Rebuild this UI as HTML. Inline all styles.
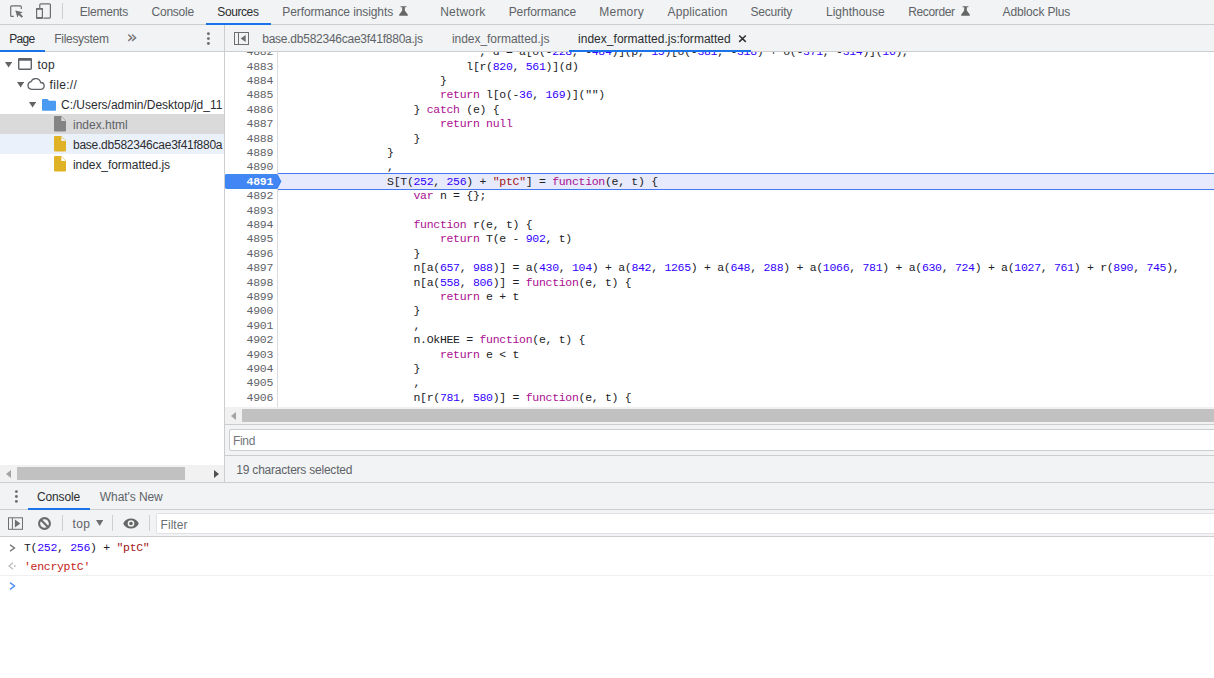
<!DOCTYPE html>
<html>
<head>
<meta charset="utf-8">
<title>DevTools</title>
<style>
*{box-sizing:border-box;margin:0;padding:0}
html,body{width:1214px;height:678px;overflow:hidden;background:#fff}
body{position:relative;font-family:"Liberation Sans",sans-serif;font-size:12px;color:#303942}
.abs{position:absolute}
.t{position:absolute;white-space:nowrap;line-height:16px;height:16px;color:#5f6368;font-size:12px}
.t.sel{color:#2b2d30}
.bar{position:absolute;background:#f1f3f4}
.ln{position:absolute;background:#cbcdd1}
.mono{font-family:"Liberation Mono",monospace;font-size:11.5px;letter-spacing:-0.3px}
.code{position:absolute;left:0;white-space:pre;line-height:14.4px;height:14.4px;color:#202124}
.gn{position:absolute;left:0;width:48px;text-align:right;line-height:14.4px;height:14.4px;color:#5f6368;white-space:pre}
.gn.cur{color:#fff;font-weight:bold}
.k{color:#ab0d90}.n{color:#3200ff}.s{color:#a31515}
</style>
</head>
<body>
<!-- ===== top toolbar ===== -->
<div class="bar" style="left:0;top:0;width:1214px;height:24px"></div>
<div class="ln" style="left:0;top:24px;width:1214px;height:1px"></div>
<div class="ln" style="left:62px;top:3px;width:1px;height:16px;background:#cdcfd2"></div>
<svg class="abs" style="left:8px;top:3px" width="18" height="18" viewBox="0 0 18 18"><path d="M13.300 6v-2.200a1 1 0 0 0-1-1h-8.600a1 1 0 0 0-1 1v8.600a1 1 0 0 0 1 1h2.100" fill="none" stroke="#6e6e6e" stroke-width="1.200"/><path d="M7.300 7.400l7.600 1.900-2.700 1.300 2.800 2.800-1.400 1.400-2.800-2.800-1.400 2.600z" fill="#6e6e6e"/></svg>
<svg class="abs" style="left:34px;top:2px" width="20" height="20" viewBox="0 0 20 20"><path d="M5.800 6.200v-3.400a1 1 0 0 1 1-1h8.600a1 1 0 0 1 1 1v12.300a1 1 0 0 1-1 1h-6" fill="none" stroke="#6e6e6e" stroke-width="1.200"/><rect x="2.600" y="6.700" width="5.800" height="9.400" rx="0.800" fill="none" stroke="#6e6e6e" stroke-width="1.200"/><rect x="2" y="6.100" width="7" height="1.700" rx="0.500" fill="#6e6e6e"/><rect x="2" y="15" width="7" height="1.700" rx="0.500" fill="#6e6e6e"/></svg>

<div id="L1" class="t" style="left:79.84px;top:4px;letter-spacing:-0.232px">Elements</div>
<div id="L2" class="t" style="left:151.56px;top:4px;letter-spacing:-0.241px">Console</div>
<div id="L3" class="t sel" style="left:217.33px;top:4px;letter-spacing:-0.411px">Sources</div>
<div class="abs" style="left:206px;top:23px;width:65px;height:2px;background:#1a73e8"></div>
<div id="L4" class="t" style="left:282.28px;top:4px;letter-spacing:-0.097px">Performance insights</div>
<div id="L5" class="t" style="left:440.28px;top:4px;letter-spacing:0.177px">Network</div>
<div id="L6" class="t" style="left:508.75px;top:4px;letter-spacing:-0.132px">Performance</div>
<div id="L7" class="t" style="left:599.28px;top:4px;letter-spacing:0.226px">Memory</div>
<div id="L8" class="t" style="left:667.59px;top:4px;letter-spacing:0.120px">Application</div>
<div id="L9" class="t" style="left:750.45px;top:4px;letter-spacing:-0.214px">Security</div>
<div id="L10" class="t" style="left:826.05px;top:4px;letter-spacing:-0.014px">Lighthouse</div>
<div id="L11" class="t" style="left:908.28px;top:4px;letter-spacing:-0.374px">Recorder</div>
<div id="L12" class="t" style="left:1002.59px;top:4px;letter-spacing:-0.144px">Adblock Plus</div>
<svg class="abs flask" style="left:398.5px;top:5.500px" width="9" height="10" viewBox="0 0 9 10"><path d="M1.600 0.200h5.800v1h-5.800z M3.200 1.200h2.600v3.200l2.900 4.200a.7.700 0 0 1-.6 1.200h-7.200a.7.700 0 0 1-.6-1.200l2.900-4.200z" fill="#666"/></svg>
<svg class="abs flask" style="left:961.2px;top:5.500px" width="9" height="10" viewBox="0 0 9 10"><path d="M1.600 0.200h5.800v1h-5.800z M3.200 1.200h2.600v3.200l2.900 4.200a.7.700 0 0 1-.6 1.200h-7.200a.7.700 0 0 1-.6-1.200l2.900-4.200z" fill="#666"/></svg>

<!-- ===== navigator (left) ===== -->
<div class="bar" style="left:0;top:25px;width:224px;height:26px"></div>
<div class="ln" style="left:0;top:51px;width:224px;height:1px"></div>
<div class="ln" style="left:224px;top:25px;width:1px;height:457px"></div>
<div id="L13" class="t sel" style="left:9.28px;top:31px;letter-spacing:-0.713px">Page</div>
<div class="abs" style="left:0;top:50px;width:45px;height:2px;background:#1a73e8"></div>
<div id="L14" class="t" style="left:54.28px;top:31px;letter-spacing:-0.296px">Filesystem</div>
<div id="L15" class="t" style="left:126.5px;top:28.500px;font-size:18px;font-family:'DejaVu Sans',sans-serif;color:#6e6e6e">»</div>
<svg class="abs" style="left:206px;top:31px" width="5" height="15" viewBox="0 0 5 15"><circle cx="2.400" cy="2.700" r="1.450" fill="#6e6e6e"/><circle cx="2.400" cy="7.600" r="1.450" fill="#6e6e6e"/><circle cx="2.400" cy="12.500" r="1.450" fill="#6e6e6e"/></svg>

<!-- tree -->
<div class="abs" style="left:0;top:114px;width:224px;height:20px;background:#dadada"></div>
<div class="abs" style="left:0;top:134px;width:224px;height:20px;background:#ebf1fb"></div>
<svg class="abs" style="left:5px;top:62px" width="7.200" height="5.600" viewBox="0 0 7.200 5.600"><path d="M0 0h7.200L3.600 5.600z" fill="#636363"/></svg>
<svg class="abs" style="left:18px;top:58px" width="14" height="12" viewBox="0 0 14 12"><rect x="0.7" y="0.7" width="12.6" height="10.6" rx="1" fill="none" stroke="#5f6368" stroke-width="1.4"/><rect x="0.200" y="0" width="13.600" height="2.700" rx="0.800" fill="#5f6368"/></svg>
<div id="L16" class="t sel" style="left:37.47px;top:57px;letter-spacing:0.265px">top</div>
<svg class="abs" style="left:17px;top:82px" width="7.200" height="5.600" viewBox="0 0 7.200 5.600"><path d="M0 0h7.200L3.600 5.600z" fill="#636363"/></svg>
<svg class="abs" style="left:27px;top:78px" width="18" height="12" viewBox="0 0 18 12"><path d="M4.6 11.3a3.9 3.9 0 0 1-.5-7.7 5 5 0 0 1 9.500.9 3.400 3.400 0 0 1 .3 6.800z" fill="none" stroke="#5f6368" stroke-width="1.3"/></svg>
<div id="L17" class="t sel" style="left:49.52px;top:77px;letter-spacing:0.331px">file://</div>
<svg class="abs" style="left:29px;top:102px" width="7.200" height="5.600" viewBox="0 0 7.200 5.600"><path d="M0 0h7.200L3.600 5.600z" fill="#636363"/></svg>
<svg class="abs" style="left:42px;top:99px" width="14" height="12" viewBox="0 0 14 12"><path d="M0.800 0h4.700l1.500 1.800h6.200a.8.8 0 0 1 .8.800v8.400a.8.8 0 0 1-.8.800h-12.400a.8.8 0 0 1-.8-.8v-10.200a.8.800 0 0 1 .8-.8z" fill="#4a9af1"/></svg>
<div id="L18" class="t sel" style="left:61.10px;top:97px;width:162.90px;overflow:hidden;letter-spacing:-0.023px">C:/Users/admin/Desktop/jd_11</div>
<svg class="abs" style="left:54px;top:116px" width="12" height="16" viewBox="0 0 12 16"><path d="M1 0h6.500l4.500 4.800v9.700a1 1 0 0 1-1 1h-10a1 1 0 0 1-1-1v-13.500a1 1 0 0 1 1-1z" fill="#848484"/><path d="M7.300 0.300v4.700h4.500z" fill="#dadada"/></svg>
<div id="L19" class="t" style="left:72.97px;top:117px;letter-spacing:0.005px">index.html</div>
<svg class="abs" style="left:54px;top:136px" width="12" height="16" viewBox="0 0 12 16"><path d="M1 0h6.500l4.500 4.800v9.700a1 1 0 0 1-1 1h-10a1 1 0 0 1-1-1v-13.500a1 1 0 0 1 1-1z" fill="#e0b327"/><path d="M7.300 0.300v4.700h4.500z" fill="#ebf1fb"/></svg>
<div id="L20" class="t sel" style="left:72.97px;top:137px;width:150.23px;overflow:hidden;letter-spacing:-0.246px">base.db582346cae3f41f880a.js</div>
<svg class="abs" style="left:54px;top:156px" width="12" height="16" viewBox="0 0 12 16"><path d="M1 0h6.500l4.500 4.800v9.700a1 1 0 0 1-1 1h-10a1 1 0 0 1-1-1v-13.500a1 1 0 0 1 1-1z" fill="#e0b327"/><path d="M7.300 0.300v4.700h4.500z" fill="#fff"/></svg>
<div id="L21" class="t sel" style="left:72.90px;top:157px;letter-spacing:-0.050px">index_formatted.js</div>

<!-- navigator h-scrollbar -->
<div class="abs" style="left:0;top:465px;width:224px;height:17px;background:#f1f1f1"></div>
<div class="abs" style="left:17px;top:467px;width:168px;height:13px;background:#c1c1c1"></div>
<svg class="abs" style="left:6px;top:470px" width="5" height="8" viewBox="0 0 5 8"><path d="M5 0v8L0 4z" fill="#a3a3a3"/></svg>
<svg class="abs" style="left:214px;top:470px" width="5" height="8" viewBox="0 0 5 8"><path d="M0 0v8L5 4z" fill="#505050"/></svg>

<!-- ===== editor ===== -->
<div class="bar" style="left:225px;top:25px;width:989px;height:26px"></div>
<div class="ln" style="left:225px;top:51px;width:989px;height:1px"></div>
<svg class="abs" style="left:234px;top:32px" width="15" height="13" viewBox="0 0 15 13"><rect x="0.5" y="0.5" width="14" height="12" fill="none" stroke="#6e6e6e" stroke-width="1"/><path d="M4.500 0.500v12" stroke="#6e6e6e" stroke-width="1"/><path d="M11.700 3.100v6.800L6.600 6.500z" fill="#6e6e6e"/></svg>
<div id="L22" class="t" style="left:262.25px;top:31px;letter-spacing:-0.249px">base.db582346cae3f41f880a.js</div>
<div id="L23" class="t" style="left:451.89px;top:31px;letter-spacing:-0.031px">index_formatted.js</div>
<div id="L24" class="t sel" style="left:578.06px;top:31px;letter-spacing:0.020px">index_formatted.js:formatted</div>
<div class="abs" style="left:569px;top:50px;width:182px;height:2px;background:#1a73e8"></div>
<svg class="abs" style="left:738px;top:34px" width="9" height="9" viewBox="0 0 9 9"><path d="M1.200 1.500l6.600 6.400M7.800 1.500l-6.600 6.400" stroke="#303030" stroke-width="1.500" fill="none"/></svg>

<div class="ln" style="left:277px;top:52px;width:1px;height:355px;background:#dadce0"></div>
<div id="editor" class="abs mono" style="left:225px;top:52px;width:989px;height:355px;overflow:hidden">
<div class="abs" style="left:53px;top:121px;width:940px;height:17px;background:#e7eafc;border-top:1px solid #4478f0;border-bottom:1px solid #4478f0"></div>
<svg class="abs" style="left:0;top:122px" width="58" height="15" viewBox="0 0 58 15"><path d="M1.200 0.400h51l3.700 7-3.700 7h-51a.8.8 0 0 1-.8-.8v-12.400a.8.800 0 0 1 .8-.8z" fill="#4285f4" stroke="#1a73e8" stroke-width="0.800"/></svg>
<!--ED-->
<div class="gn" style="top:-6.8px">4882</div>
<div class="code" style="top:-6.8px;left:254.5px">, d = a[o(-<span class="n">228</span>, -<span class="n">484</span>)](p, <span class="n">15</span>)[o(-<span class="n">381</span>, -<span class="n">318</span>) + o(-<span class="n">371</span>, -<span class="n">314</span>)](<span class="n">16</span>),</div>
<div class="gn" style="top:7.6px">4883</div>
<div class="code" style="top:7.6px;left:241.3px">l[r(<span class="n">820</span>, <span class="n">561</span>)](d)</div>
<div class="gn" style="top:22.0px">4884</div>
<div class="code" style="top:22.0px;left:214.9px">}</div>
<div class="gn" style="top:36.4px">4885</div>
<div class="code" style="top:36.4px;left:214.9px"><span class="k">return</span> l[o(-<span class="n">36</span>, <span class="n">169</span>)]("")</div>
<div class="gn" style="top:50.8px">4886</div>
<div class="code" style="top:50.8px;left:188.5px">} <span class="k">catch</span> (e) {</div>
<div class="gn" style="top:65.2px">4887</div>
<div class="code" style="top:65.2px;left:214.9px"><span class="k">return</span> <span class="k">null</span></div>
<div class="gn" style="top:79.6px">4888</div>
<div class="code" style="top:79.6px;left:188.5px">}</div>
<div class="gn" style="top:94.0px">4889</div>
<div class="code" style="top:94.0px;left:162.1px">}</div>
<div class="gn" style="top:108.4px">4890</div>
<div class="code" style="top:108.4px;left:162.1px">,</div>
<div class="gn cur" style="top:122.8px">4891</div>
<div class="code" style="top:122.8px;left:162.1px">S[T(<span class="n">252</span>, <span class="n">256</span>) + <span class="s">"ptC"</span>] = <span class="k">function</span>(e, t) {</div>
<div class="gn" style="top:137.2px">4892</div>
<div class="code" style="top:137.2px;left:188.5px"><span class="k">var</span> n = {};</div>
<div class="gn" style="top:151.6px">4893</div>
<div class="gn" style="top:166.0px">4894</div>
<div class="code" style="top:166.0px;left:188.5px"><span class="k">function</span> r(e, t) {</div>
<div class="gn" style="top:180.4px">4895</div>
<div class="code" style="top:180.4px;left:214.9px"><span class="k">return</span> T(e - <span class="n">902</span>, t)</div>
<div class="gn" style="top:194.8px">4896</div>
<div class="code" style="top:194.8px;left:188.5px">}</div>
<div class="gn" style="top:209.2px">4897</div>
<div class="code" style="top:209.2px;left:188.5px">n[a(<span class="n">657</span>, <span class="n">988</span>)] = a(<span class="n">430</span>, <span class="n">104</span>) + a(<span class="n">842</span>, <span class="n">1265</span>) + a(<span class="n">648</span>, <span class="n">288</span>) + a(<span class="n">1066</span>, <span class="n">781</span>) + a(<span class="n">630</span>, <span class="n">724</span>) + a(<span class="n">1027</span>, <span class="n">761</span>) + r(<span class="n">890</span>, <span class="n">745</span>),</div>
<div class="gn" style="top:223.6px">4898</div>
<div class="code" style="top:223.6px;left:188.5px">n[a(<span class="n">558</span>, <span class="n">806</span>)] = <span class="k">function</span>(e, t) {</div>
<div class="gn" style="top:238.0px">4899</div>
<div class="code" style="top:238.0px;left:214.9px"><span class="k">return</span> e + t</div>
<div class="gn" style="top:252.4px">4900</div>
<div class="code" style="top:252.4px;left:188.5px">}</div>
<div class="gn" style="top:266.8px">4901</div>
<div class="code" style="top:266.8px;left:188.5px">,</div>
<div class="gn" style="top:281.2px">4902</div>
<div class="code" style="top:281.2px;left:188.5px">n.OkHEE = <span class="k">function</span>(e, t) {</div>
<div class="gn" style="top:295.6px">4903</div>
<div class="code" style="top:295.6px;left:214.9px"><span class="k">return</span> e &lt; t</div>
<div class="gn" style="top:310.0px">4904</div>
<div class="code" style="top:310.0px;left:188.5px">}</div>
<div class="gn" style="top:324.4px">4905</div>
<div class="code" style="top:324.4px;left:188.5px">,</div>
<div class="gn" style="top:338.8px">4906</div>
<div class="code" style="top:338.8px;left:188.5px">n[r(<span class="n">781</span>, <span class="n">580</span>)] = <span class="k">function</span>(e, t) {</div>
<!--/ED-->
</div>

<!-- editor h-scrollbar -->
<div class="abs" style="left:225px;top:407px;width:989px;height:17px;background:#f1f1f1"></div>
<div class="abs" style="left:242px;top:409px;width:972px;height:13px;background:#c1c1c1"></div>
<svg class="abs" style="left:230.600px;top:411.600px" width="5" height="8" viewBox="0 0 5 8"><path d="M5 0v8L0 4z" fill="#a3a3a3"/></svg>

<!-- find bar -->
<div class="bar" style="left:225px;top:424px;width:989px;height:32px"></div>
<div class="ln" style="left:225px;top:424px;width:989px;height:1px"></div>
<div class="abs" style="left:229px;top:429px;width:990px;height:22px;background:#fff;border:1px solid #cbcdd1;border-radius:2px"></div>
<div id="L25" class="t" style="left:232.94px;top:433px;color:#72767a;letter-spacing:-0.314px">Find</div>
<div class="ln" style="left:225px;top:455px;width:989px;height:1px"></div>
<div class="bar" style="left:225px;top:456px;width:989px;height:26px"></div>
<div id="L26" class="t" style="left:236.36px;top:462px;letter-spacing:-0.225px">19 characters selected</div>

<!-- ===== drawer ===== -->
<div class="ln" style="left:0;top:482px;width:1214px;height:1px"></div>
<div class="bar" style="left:0;top:483px;width:1214px;height:26px"></div>
<div class="ln" style="left:0;top:509px;width:1214px;height:1px"></div>
<div id="L27" class="t sel" style="left:37.07px;top:489px;letter-spacing:-0.154px">Console</div>
<div class="abs" style="left:28px;top:508px;width:62px;height:2px;background:#1a73e8"></div>
<div id="L28" class="t" style="left:99.83px;top:489px;letter-spacing:-0.083px">What's New</div>
<div class="bar" style="left:0;top:510px;width:1214px;height:26px"></div>
<div class="ln" style="left:0;top:536px;width:1214px;height:1px"></div>
<div class="abs" style="left:156px;top:513px;width:1062px;height:21px;background:#fff;border:1px solid #dfe1e5;border-radius:1.500px"></div>
<div id="L29" class="t" style="left:160.61px;top:517px;color:#6b6f73;letter-spacing:0.030px">Filter</div>
<div id="L30" class="t" style="left:72.47px;top:516px;letter-spacing:0.417px">top</div>

<svg class="abs" style="left:14px;top:489px" width="5" height="15" viewBox="0 0 5 15"><circle cx="2.400" cy="2.600" r="1.450" fill="#6e6e6e"/><circle cx="2.400" cy="7.500" r="1.450" fill="#6e6e6e"/><circle cx="2.400" cy="12.400" r="1.450" fill="#6e6e6e"/></svg>
<svg class="abs" style="left:8px;top:517px" width="15" height="13" viewBox="0 0 15 13"><rect x="0.500" y="0.800" width="14" height="11.500" fill="none" stroke="#6e6e6e" stroke-width="1"/><path d="M4.400 0.800v11.500" stroke="#6e6e6e" stroke-width="1"/><path d="M6.900 2.600v7.900l5.500-3.950z" fill="#6e6e6e"/></svg>
<svg class="abs" style="left:38px;top:517px" width="13" height="13" viewBox="0 0 13 13"><circle cx="6.500" cy="6.500" r="5.400" fill="none" stroke="#6a6a6a" stroke-width="2.100"/><path d="M2.600 2.600l7.800 7.800" stroke="#6a6a6a" stroke-width="2.100"/></svg>
<div class="ln" style="left:62px;top:515px;width:1px;height:16px;background:#cdcfd2"></div>
<svg class="abs" style="left:96.200px;top:520.200px" width="7.300" height="6" viewBox="0 0 7.300 6"><path d="M0 0h7.300l-3.650 5.900z" fill="#6e6e6e"/></svg>
<div class="ln" style="left:112px;top:515px;width:1px;height:16px;background:#cdcfd2"></div>
<svg class="abs" style="left:123px;top:518px" width="16" height="11" viewBox="0 0 16 11"><path d="M0.200 5.500c1.500-3.200 4.400-5 7.800-5s6.300 1.800 7.800 5c-1.500 3.200-4.400 5-7.800 5s-6.300-1.800-7.800-5z" fill="#666"/><circle cx="8" cy="5.500" r="3.300" fill="#f1f3f4"/><circle cx="8" cy="5.500" r="1.800" fill="#666"/></svg>
<div class="ln" style="left:149px;top:515px;width:1px;height:16px;background:#cdcfd2"></div>
<svg class="abs" style="left:9px;top:544px" width="7" height="8" viewBox="0 0 7 8"><path d="M1 0.800l4.500 3.200-4.500 3.200" fill="none" stroke="#6e6e6e" stroke-width="1.300"/></svg>
<svg class="abs" style="left:8px;top:562px" width="9" height="8" viewBox="0 0 9 8"><path d="M5 0.800l-4 3.200 4 3.200" fill="none" stroke="#bdbdbd" stroke-width="1.300"/><circle cx="6.800" cy="4" r="0.900" fill="#bdbdbd"/></svg>
<svg class="abs" style="left:9px;top:582px" width="7" height="8" viewBox="0 0 7 8"><path d="M1 0.600l4.500 3.400-4.500 3.400" fill="none" stroke="#4f8df5" stroke-width="1.400"/></svg>
<!-- console rows -->
<div class="abs mono" style="left:24px;top:541px;line-height:14px;white-space:pre;color:#202124">T(<span class="n">252</span>, <span class="n">256</span>) + <span class="s">"ptC"</span></div>
<div class="abs mono" style="left:24px;top:560px;line-height:14px;white-space:pre" ><span class="s" style="color:#c41a16">'encryptC'</span></div>
<div class="ln" style="left:0;top:575px;width:1214px;height:1px;background:#f0f0f0"></div>

</body>
</html>
